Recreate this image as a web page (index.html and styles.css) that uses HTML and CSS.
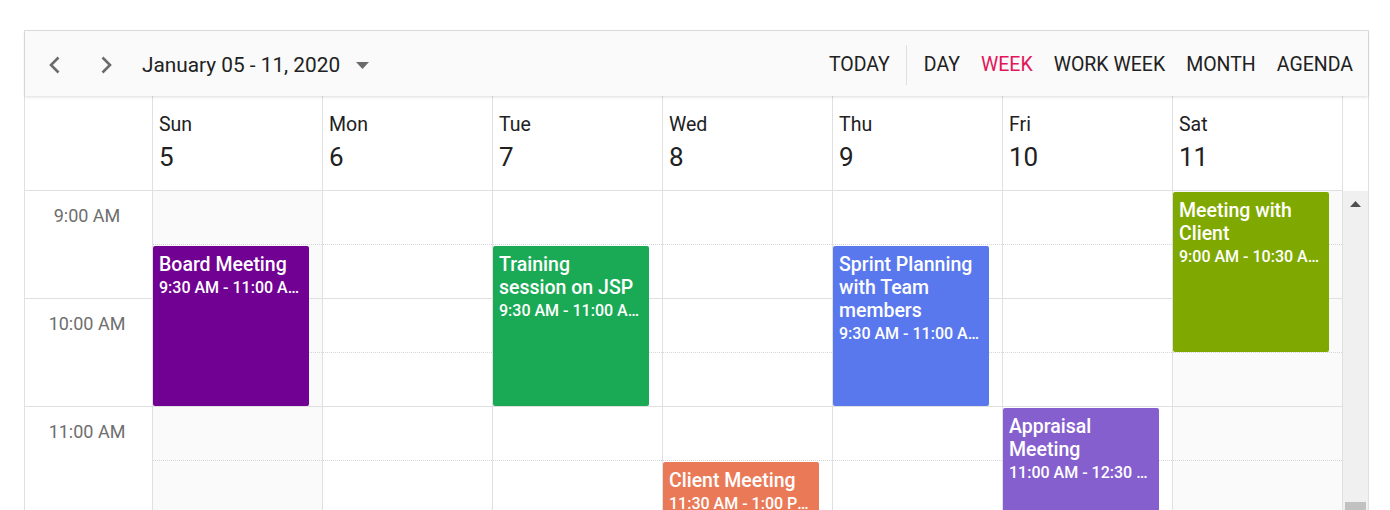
FILE: index.html
```html
<!DOCTYPE html>
<html lang="en">
<head>
<meta charset="utf-8">
<title>Scheduler - Week</title>
<link rel="stylesheet" href="styles.css">
</head>
<body>
<div class="page">
  <div class="scheduler">
    <div class="toolbar">
      <div class="tb-left">
        <button class="nav-btn prev" aria-label="Previous">
          <svg width="20" height="20" viewBox="0 0 20 20"><polyline points="13.5,2.5 6,10 13.5,17.5" fill="none" stroke="#6b6b6b" stroke-width="2.6"/></svg>
        </button>
        <button class="nav-btn next" aria-label="Next">
          <svg width="20" height="20" viewBox="0 0 20 20"><polyline points="6.5,2.5 14,10 6.5,17.5" fill="none" stroke="#6b6b6b" stroke-width="2.6"/></svg>
        </button>
        <div class="date-range">January 05 - 11, 2020</div>
        <svg class="caret" width="13" height="7" viewBox="0 0 13 7"><polygon points="0,0 13,0 6.5,7" fill="#6b6b6b"/></svg>
      </div>
      <div class="tb-right">
        <span class="tb-item">TODAY</span>
        <span class="tb-sep"></span>
        <span class="tb-item">DAY</span>
        <span class="tb-item active">WEEK</span>
        <span class="tb-item">WORK WEEK</span>
        <span class="tb-item">MONTH</span>
        <span class="tb-item">AGENDA</span>
      </div>
    </div>

    <div class="header">
      <div class="hd-time"></div>
      <div class="hd-day"><div class="day-name">Sun</div><div class="day-num">5</div></div>
      <div class="hd-day"><div class="day-name">Mon</div><div class="day-num">6</div></div>
      <div class="hd-day"><div class="day-name">Tue</div><div class="day-num">7</div></div>
      <div class="hd-day"><div class="day-name">Wed</div><div class="day-num">8</div></div>
      <div class="hd-day"><div class="day-name">Thu</div><div class="day-num">9</div></div>
      <div class="hd-day"><div class="day-name">Fri</div><div class="day-num">10</div></div>
      <div class="hd-day last"><div class="day-name">Sat</div><div class="day-num">11</div></div>
      <div class="hd-gap"></div>
    </div>

    <div class="body">
      <div class="time-col">
        <div class="hour"><span>9:00 AM</span></div>
        <div class="hour"><span>10:00 AM</span></div>
        <div class="hour"><span>11:00 AM</span></div>
      </div>

      <div class="day-col off">
        <div class="slot half"></div><div class="slot"></div><div class="slot half"></div><div class="slot"></div><div class="slot half"></div><div class="slot"></div>
        <div class="event purple" style="top:55px;">
          <div class="ev-title">Board Meeting</div>
          <div class="ev-time">9:30 AM - 11:00 AM</div>
        </div>
      </div>

      <div class="day-col">
        <div class="slot half"></div><div class="slot"></div><div class="slot half"></div><div class="slot"></div><div class="slot half"></div><div class="slot"></div>
      </div>

      <div class="day-col">
        <div class="slot half"></div><div class="slot"></div><div class="slot half"></div><div class="slot"></div><div class="slot half"></div><div class="slot"></div>
        <div class="event green" style="top:55px;">
          <div class="ev-title">Training session on JSP</div>
          <div class="ev-time">9:30 AM - 11:00 AM</div>
        </div>
      </div>

      <div class="day-col">
        <div class="slot half"></div><div class="slot"></div><div class="slot half"></div><div class="slot"></div><div class="slot half"></div><div class="slot"></div>
        <div class="event orange" style="top:271px;">
          <div class="ev-title">Client Meeting</div>
          <div class="ev-time">11:30 AM - 1:00 PM</div>
        </div>
      </div>

      <div class="day-col">
        <div class="slot half"></div><div class="slot"></div><div class="slot half"></div><div class="slot"></div><div class="slot half"></div><div class="slot"></div>
        <div class="event blue" style="top:55px;">
          <div class="ev-title">Sprint Planning with Team members</div>
          <div class="ev-time">9:30 AM - 11:00 AM</div>
        </div>
      </div>

      <div class="day-col">
        <div class="slot half"></div><div class="slot"></div><div class="slot half"></div><div class="slot"></div><div class="slot half"></div><div class="slot"></div>
        <div class="event violet" style="top:217px;">
          <div class="ev-title">Appraisal Meeting</div>
          <div class="ev-time">11:00 AM - 12:30 PM</div>
        </div>
      </div>

      <div class="day-col off last">
        <div class="slot half"></div><div class="slot"></div><div class="slot half"></div><div class="slot"></div><div class="slot half"></div><div class="slot"></div>
        <div class="event lime" style="top:1px;">
          <div class="ev-title">Meeting with Client</div>
          <div class="ev-time">9:00 AM - 10:30 AM</div>
        </div>
      </div>

      <div class="vscroll">
        <svg class="sc-up" width="11" height="6" viewBox="0 0 11 6"><polygon points="0,6 11,6 5.5,0" fill="#505050"/></svg>
        <div class="sc-thumb"></div>
      </div>
    </div>
  </div>
</div>
</body>
</html>
```

FILE: styles.css
```css
html, body {
  margin: 0;
  padding: 0;
  overflow: hidden;
  background: #ffffff;
}

body {
  font-family: Roboto, "Liberation Sans", Arial, sans-serif;
  color: #212121;
}

.page {
  padding: 30px 0 0 24px;
}

.scheduler {
  width: 1343px;
  border: 1px solid #e0e0e0;
  border-bottom: none;
  background: #fff;
}

/* Toolbar */
.toolbar {
  height: 65px;
  box-sizing: border-box;
  padding-top: 2px;
  background: #fafafa;
  display: flex;
  align-items: center;
  justify-content: space-between;
  box-shadow: 0 1px 3px rgba(0, 0, 0, 0.14);
  position: relative;
  z-index: 2;
}

.tb-left {
  display: flex;
  align-items: center;
  padding-left: 12px;
}

.nav-btn {
  width: 36px;
  height: 36px;
  border: none;
  background: transparent;
  padding: 0;
  display: flex;
  align-items: center;
  justify-content: center;
}

.nav-btn.next {
  margin-left: 15px;
}

.date-range {
  margin-left: 18px;
  font-size: 20.8px;
  color: #212121;
}

.caret {
  margin-left: 16px;
  margin-top: 1px;
}

.tb-right {
  display: flex;
  align-items: center;
  padding-right: 15px;
}

.tb-item {
  font-size: 19.5px;
  color: #212121;
  margin-left: 21px;
}

.tb-item:first-child {
  margin-left: 0;
}

.tb-item.active {
  color: #e3165b;
}

.tb-sep {
  width: 1px;
  height: 40px;
  background: #e0e0e0;
  margin-left: 16px;
  margin-right: -4px;
}

/* Header */
.header {
  display: flex;
  height: 95px;
}

.hd-time {
  width: 127px;
  border-bottom: 1px solid #e0e0e0;
}

.hd-day {
  width: 170px;
  border-left: 1px solid #e0e0e0;
  border-bottom: 1px solid #e0e0e0;
  padding: 17px 0 0 6px;
  box-sizing: border-box;
}

.hd-day.last {
  border-right: 1px solid #e0e0e0;
  width: 171px;
}

.hd-gap {
  width: 25px;
}

.day-name {
  font-size: 19.5px;
  line-height: 24px;
  color: #212121;
}

.day-num {
  font-size: 26px;
  line-height: 30px;
  margin-top: 5px;
  color: #212121;
}

/* Body */
.body {
  display: flex;
  height: 330px;
  overflow: hidden;
}

.time-col {
  width: 127px;
}

.hour {
  height: 94px;
  border-bottom: 1px solid #e0e0e0;
  text-align: center;
  color: #6e6e6e;
  font-size: 18px;
  line-height: 24px;
  padding: 13px 3px 0 0;
}

.day-col {
  width: 169px;
  border-left: 1px solid #e0e0e0;
  position: relative;
}

.day-col.last {
  border-right: 1px solid #e0e0e0;
}

.day-col.off {
  background: #fafafa;
}

.slot {
  height: 53px;
  border-bottom: 1px solid #e0e0e0;
}

.slot.half {
  border-bottom: 1px dotted #d6d6d6;
}

/* Events */
.event {
  position: absolute;
  left: 0;
  width: 156px;
  height: 160px;
  border-radius: 2px;
  color: #ffffff;
  padding: 7px 6px 0 6px;
  box-sizing: border-box;
  overflow: hidden;
  z-index: 1;
}

.ev-title {
  font-size: 19.5px;
  font-weight: 500;
  line-height: 23px;
  padding-right: 3px;
}

.ev-time {
  width: 141px;
  font-size: 16px;
  font-weight: 500;
  line-height: 23px;
  white-space: nowrap;
  overflow: hidden;
  text-overflow: ellipsis;
}

.purple { background: #710193; }
.green { background: #1aaa55; }
.orange { background: #ea7a57; }
.blue { background: #5978ee; }
.violet { background: #865fcf; }
.lime { background: #7fa900; }

/* Scrollbar */
.vscroll {
  width: 25px;
  background: #f0f0f0;
  position: relative;
}

.sc-up {
  position: absolute;
  left: 7px;
  top: 10px;
}

.sc-thumb {
  position: absolute;
  left: 2px;
  right: 2px;
  top: 311px;
  height: 120px;
  background: #c1c1c1;
}
```
